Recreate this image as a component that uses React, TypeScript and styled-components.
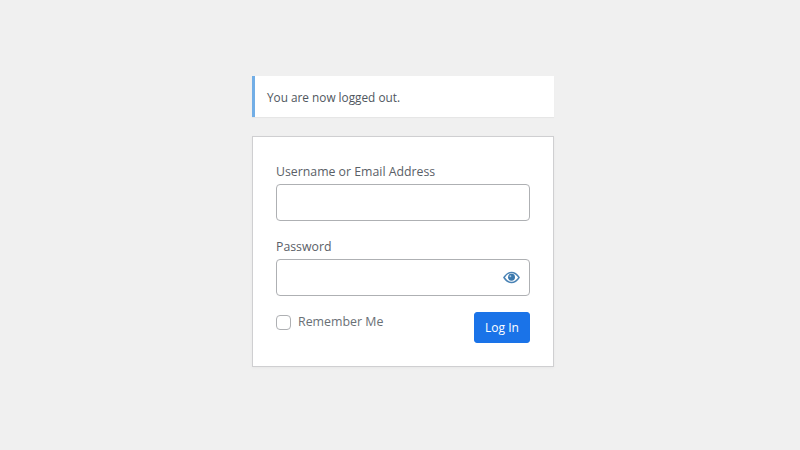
import React from "react";
import styled, { createGlobalStyle } from "styled-components";

const Global = createGlobalStyle`
  html, body { margin: 0; padding: 0; background: #f0f0f0; }
  body { font-family: "Open Sans", "Noto Sans", sans-serif; color: #50575e; }
`;

const Page = styled.div`
  width: 800px;
  height: 450px;
  overflow: hidden;
  display: flex;
  flex-direction: column;
  padding: 76px 0 0 252px;
  box-sizing: border-box;
`;

const Column = styled.div`
  width: 302px;
  display: flex;
  flex-direction: column;
  gap: 19px;
`;

const Notice = styled.div`
  height: 41px;
  box-sizing: border-box;
  background: #fff;
  border-left: 3px solid #72aee6;
  box-shadow: 0 1px 1px rgba(0, 0, 0, 0.04);
  display: flex;
  align-items: center;
  padding-left: 12px;
  font-size: 11.8px;
  color: #50575e;
`;

const Form = styled.form`
  height: 231px;
  box-sizing: border-box;
  background: #fff;
  border: 1px solid #cfcfd1;
  box-shadow: 0 1px 3px rgba(0, 0, 0, 0.04);
  padding: 26px 23px 0;
  display: flex;
  flex-direction: column;
`;

const Field = styled.div`
  display: flex;
  flex-direction: column;
  gap: 3px;
  margin-bottom: 17px;
`;

const Label = styled.label`
  font-size: 12.3px;
  line-height: 18px;
  color: #5a6067;
`;

const InputWrap = styled.div`
  position: relative;
  height: 37px;
`;

const Input = styled.input`
  width: 100%;
  height: 100%;
  box-sizing: border-box;
  border: 1.5px solid #aeb0b3;
  border-radius: 4px;
  background: #fff;
  outline: none;
`;

const Eye = styled.svg`
  position: absolute;
  right: 10px;
  top: 12px;
  width: 17px;
  height: 13px;
`;

const Actions = styled.div`
  display: flex;
  justify-content: space-between;
  align-items: flex-start;
`;

const Remember = styled.label`
  display: flex;
  align-items: center;
  gap: 7px;
  font-size: 12.4px;
  line-height: 18px;
  color: #6a7076;
`;

const Box = styled.span`
  width: 15px;
  height: 15px;
  box-sizing: border-box;
  border: 1.5px solid #aeb0b3;
  border-radius: 4px;
  background: #fff;
`;

const Button = styled.button`
  width: 56px;
  height: 31px;
  margin-top: -1px;
  border: 1px solid #1a73e8;
  border-radius: 3px;
  background: #1a73e8;
  color: #fff;
  font-family: inherit;
  font-size: 12px;
  padding: 0;
`;

export default function App() {
  return (
    <Page>
      <Global />
      <Column>
        <Notice>You are now logged out.</Notice>
        <Form>
          <Field>
            <Label>Username or Email Address</Label>
            <InputWrap><Input type="text" /></InputWrap>
          </Field>
          <Field>
            <Label>Password</Label>
            <InputWrap>
              <Input type="password" />
              <Eye viewBox="0 0 18 13" aria-hidden="true">
                <path d="M1 6.5C3.2 3 5.9 1.2 9 1.2s5.8 1.8 8 5.3c-2.2 3.5-4.9 5.3-8 5.3S3.2 10 1 6.5z" fill="#fff" stroke="#4a83b5" strokeWidth="1.5" />
                <circle cx="9" cy="6.3" r="3.7" fill="#3a78ad" />
                <circle cx="7.8" cy="5.2" r="1" fill="#a9c8e2" />
              </Eye>
            </InputWrap>
          </Field>
          <Actions>
            <Remember><Box />Remember Me</Remember>
            <Button type="button">Log In</Button>
          </Actions>
        </Form>
      </Column>
    </Page>
  );
}
